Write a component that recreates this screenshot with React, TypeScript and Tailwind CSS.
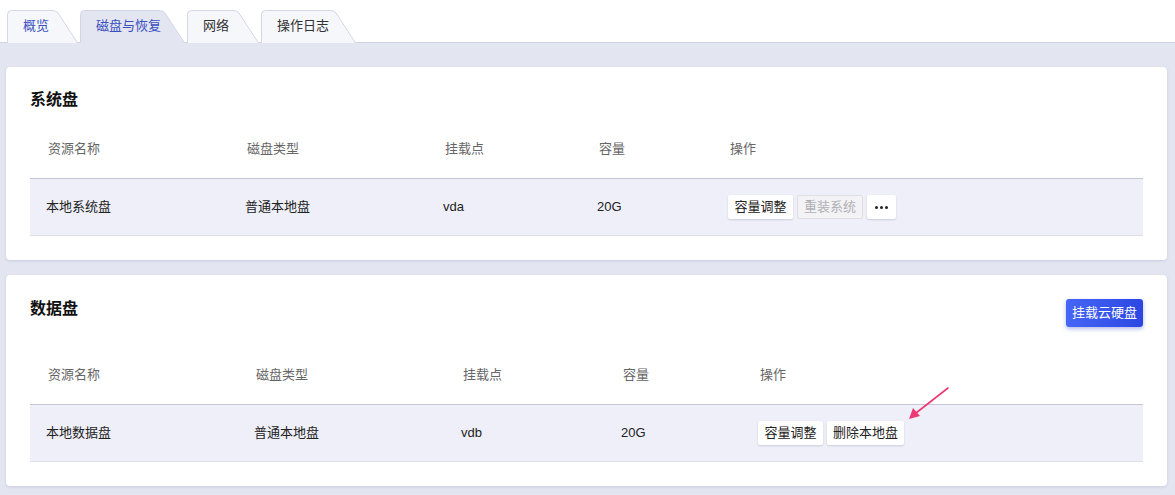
import React from "react";

const font = { fontFamily: '"Liberation Sans", "Noto Sans CJK SC", sans-serif' };

const tabs = [
  { label: "概览", w: 71, active: false, blue: true },
  { label: "磁盘与恢复", w: 105, active: true, blue: true },
  { label: "网络", w: 72, active: false, blue: false },
  { label: "操作日志", w: 95, active: false, blue: false },
];

function Tab({ label, w, active, blue }: { label: string; w: number; active: boolean; blue: boolean }) {
  return (
    <div className="relative h-[32px] flex items-center pl-4" style={{ width: w }}>
      <svg className="absolute inset-0" width={w} height={33} viewBox={`0 0 ${w} 33`}>
        <path
          d={`M0.5 33 V4.5 Q0.5 0.5 4.5 0.5 H${w - 26} Q${w - 22} 0.5 ${w - 20} 3 L${w - 0.5} 33`}
          fill={active ? "#e3e5f1" : "#f6f7fb"}
          stroke="#d3d6e8"
        />
      </svg>
      <span className={`relative text-[13px] ${blue ? "text-[#3a4fc0]" : "text-[#333]"}`}>{label}</span>
    </div>
  );
}

function Btn({ children, disabled, className = "" }: { children: React.ReactNode; disabled?: boolean; className?: string }) {
  return (
    <button
      className={
        (disabled
          ? "h-[24px] px-[6px] rounded-[2px] border border-[#dedee3] bg-[#f3f3f5] text-[13px] text-[#b0b0b5]"
          : "h-[24px] px-[6px] rounded-[2px] bg-white text-[13px] text-[#222] shadow-[0_1px_2px_rgba(40,50,90,0.18)]") +
        " " +
        className
      }
    >
      {children}
    </button>
  );
}

function DiskTable({ cols, row, actions }: { cols: string; row: string[]; actions: React.ReactNode }) {
  const heads = ["资源名称", "磁盘类型", "挂载点", "容量", "操作"];
  return (
    <div>
      <div className={`grid ${cols} h-[59px] items-center border-b border-[#c4c6d3]`}>
        {heads.map((h) => (
          <div key={h} className="pl-[18px] text-[13px] text-[#666]">{h}</div>
        ))}
      </div>
      <div className={`grid ${cols} h-[57px] items-center bg-[#eeeff8] border-b border-[#dcdee8]`}>
        {row.map((c) => (
          <div key={c} className="pl-4 text-[13px] text-[#222]">{c}</div>
        ))}
        <div className="pl-4 flex gap-1">{actions}</div>
      </div>
    </div>
  );
}

export default function App() {
  return (
    <div className="w-[1175px] h-[495px] bg-[#e3e5f1] relative overflow-hidden" style={font}>
      <div className="bg-white h-[43px] pt-[10px] pl-[7px] border-b border-[#d0d3e6] flex items-end gap-[2px]">
        {tabs.map((t) => (
          <Tab key={t.label} {...t} />
        ))}
      </div>

      <div className="pt-6 pl-[6px] pr-2 flex flex-col gap-[15px]">
        <div className="bg-white rounded-[4px] shadow-[0_1px_3px_rgba(60,70,120,0.15)] px-6 pt-6 pb-6">
          <div className="text-[16px] leading-[17px] font-bold text-[#111]">系统盘</div>
          <div className="mt-3">
            <DiskTable
              cols="grid-cols-[199px_198px_154px_131px_1fr]"
              row={["本地系统盘", "普通本地盘", "vda", "20G"]}
              actions={
                <>
                  <Btn className="w-[65px]">容量调整</Btn>
                  <Btn disabled className="w-[66px]">重装系统</Btn>
                  <Btn className="w-[29px] flex items-center justify-center gap-[2px]">
                    <span className="w-[3px] h-[3px] rounded-full bg-[#222]" />
                    <span className="w-[3px] h-[3px] rounded-full bg-[#222]" />
                    <span className="w-[3px] h-[3px] rounded-full bg-[#222]" />
                  </Btn>
                </>
              }
            />
          </div>
        </div>

        <div className="bg-white rounded-[4px] shadow-[0_1px_3px_rgba(60,70,120,0.15)] px-6 pt-6 pb-6">
          <div className="flex justify-between items-start">
            <div className="text-[16px] leading-[17px] font-bold text-[#111] mt-[1px]">数据盘</div>
            <button className="h-[28px] w-[77px] rounded-[3px] bg-gradient-to-r from-[#4666f6] to-[#2c46e2] text-white text-[13px] shadow-[0_2px_4px_rgba(40,60,200,0.35)]">
              挂载云硬盘
            </button>
          </div>
          <div className="mt-[19px]">
            <DiskTable
              cols="grid-cols-[208px_207px_160px_137px_1fr]"
              row={["本地数据盘", "普通本地盘", "vdb", "20G"]}
              actions={
                <>
                  <Btn className="w-[65px]">容量调整</Btn>
                  <Btn className="w-[77px]">删除本地盘</Btn>
                </>
              }
            />
          </div>
        </div>
      </div>

      <svg className="absolute left-[900px] top-[383px]" width="56" height="42" viewBox="0 0 56 42">
        <line x1="48" y1="5" x2="16" y2="30" stroke="#ee3a73" strokeWidth="1.6" strokeLinecap="round" />
        <path d="M9 36 L13 25 L20 33 Z" fill="#ee3a73" />
      </svg>
    </div>
  );
}
